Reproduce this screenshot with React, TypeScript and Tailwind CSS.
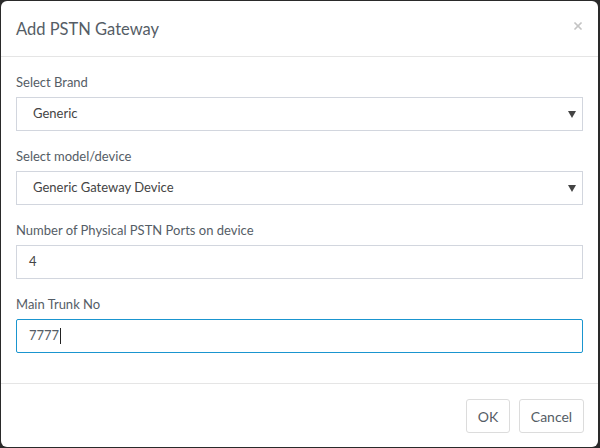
import { X } from 'lucide-react';

const FONT = "font-['Lato','Open_Sans',sans-serif]";

function Field({ label, children }: { label: string; children: React.ReactNode }) {
  return (
    <div className="mb-[15px]">
      <div className="text-[13px] leading-[20px] text-[#555d66] mb-[5px]">{label}</div>
      {children}
    </div>
  );
}

function FakeSelect({ value }: { value: string }) {
  return (
    <div className="h-[34px] border border-[#d2d6de] bg-white flex items-center justify-between pl-[16px] pr-[6px]">
      <span className="text-[13px] text-[#444]">{value}</span>
      <svg width="8" height="8" viewBox="0 0 8 8">
        <polygon points="0,1 8,1 4,8" fill="#444" />
      </svg>
    </div>
  );
}

export default function App() {
  return (
    <div className={`w-[600px] h-[448px] bg-[#2a2a2a] pt-[1px] pl-[1px] ${FONT}`}>
      <div className="w-[597px] h-[446px] bg-white rounded-[6px] flex flex-col">
        <div className="h-[56px] px-[15px] flex items-center justify-between border-b border-[#e5e5e5]">
          <h4 className="text-[16.5px] text-[#555d66] leading-[26px]">Add PSTN Gateway</h4>
          <X className="w-[12px] h-[12px] text-[#c4c4c4] -mr-[1px] -mt-[6px]" strokeWidth={3.5} />
        </div>
        <div className="px-[15px] pt-[15px] pb-[15px] border-b border-[#e5e5e5]">
          <Field label="Select Brand">
            <FakeSelect value="Generic" />
          </Field>
          <Field label="Select model/device">
            <FakeSelect value="Generic Gateway Device" />
          </Field>
          <Field label="Number of Physical PSTN Ports on device">
            <div className="h-[34px] border border-[#d2d6de] flex items-center pl-[12px] text-[13px] text-[#444]">4</div>
          </Field>
          <Field label="Main Trunk No">
            <div className="h-[34px] border border-[#1a95cf] rounded-[2px] flex items-center pl-[12px] text-[13px] text-[#555d66]">
              7777<span className="inline-block w-px h-[16px] bg-[#222] ml-px" />
            </div>
          </Field>
        </div>
        <div className="flex-1 flex items-start justify-end gap-[9px] px-[14px] pt-[15px]">
          <button className="h-[34px] w-[44px] border border-[#dcdcdc] rounded-[3px] text-[14px] text-[#555d66] bg-white">OK</button>
          <button className="h-[34px] w-[65px] border border-[#dcdcdc] rounded-[3px] text-[14px] text-[#555d66] bg-white">Cancel</button>
        </div>
      </div>
    </div>
  );
}
